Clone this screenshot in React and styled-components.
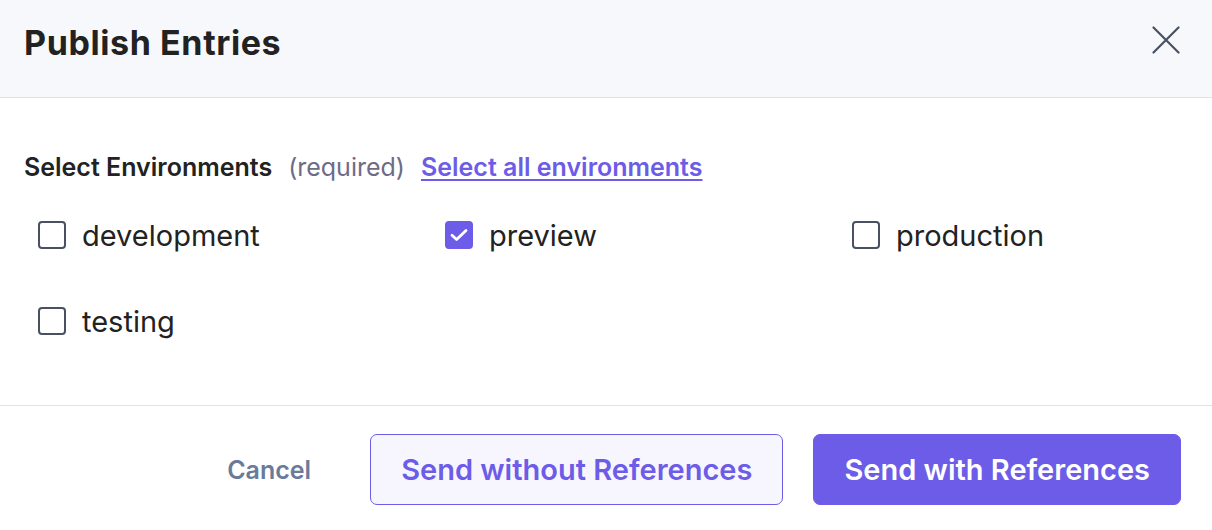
import React, { useState } from 'react';
import styled, { createGlobalStyle } from 'styled-components';

const GlobalStyle = createGlobalStyle`
  html, body {
    margin: 0;
    padding: 0;
    background: #ffffff;
  }
  body {
    font-family: Inter, "Noto Sans", sans-serif;
    color: #222222;
  }
`;

const environments = ['development', 'preview', 'production', 'testing'];

const App = () => {
  const [selected, setSelected] = useState(['preview']);

  const toggle = (env) => {
    setSelected((prev) =>
      prev.includes(env) ? prev.filter((e) => e !== env) : [...prev, env]
    );
  };

  return (
    <>
      <GlobalStyle />
      <Modal>
        <Header>
          <Title>Publish Entries</Title>
          <CloseButton aria-label="Close">
            <svg width="28" height="28" viewBox="0 0 28 28" fill="none">
              <path d="M1.5 1.5L26.5 26.5M26.5 1.5L1.5 26.5" stroke="#475161" strokeWidth="2.2" strokeLinecap="round" />
            </svg>
          </CloseButton>
        </Header>

        <Body>
          <LabelRow>
            <Label>Select Environments</Label>
            <Required>(required)</Required>
            <SelectAll href="#" onClick={(e) => { e.preventDefault(); setSelected(environments); }}>
              Select all environments
            </SelectAll>
          </LabelRow>

          <EnvGrid>
            {environments.map((env) => {
              const checked = selected.includes(env);
              return (
                <EnvOption key={env} onClick={() => toggle(env)}>
                  <Box $checked={checked}>
                    {checked && (
                      <svg width="18" height="14" viewBox="0 0 18 14" fill="none">
                        <path d="M2 7.2L6.6 11.6L16 2.4" stroke="#ffffff" strokeWidth="2.8" strokeLinecap="round" strokeLinejoin="round" />
                      </svg>
                    )}
                  </Box>
                  <EnvName>{env}</EnvName>
                </EnvOption>
              );
            })}
          </EnvGrid>
        </Body>

        <Footer>
          <CancelButton>Cancel</CancelButton>
          <Button $variant="outline">Send without References</Button>
          <Button $variant="primary">Send with References</Button>
        </Footer>
      </Modal>
    </>
  );
};

const Modal = styled.div`
  width: 1212px;
  height: 530px;
  background: #ffffff;
  display: flex;
  flex-direction: column;
`;

const Header = styled.div`
  height: 98px;
  box-sizing: border-box;
  background: #f7f8fc;
  border-bottom: 1px solid #dde3ee;
  display: flex;
  align-items: center;
  justify-content: space-between;
  padding: 0 32px 12px 24px;
`;

const Title = styled.h2`
  margin: 0;
  font-size: 34px;
  line-height: 40px;
  font-weight: 700;
  color: #222222;
  letter-spacing: 0.6px;
`;

const CloseButton = styled.button`
  border: none;
  background: none;
  padding: 0;
  width: 28px;
  height: 28px;
  margin-bottom: 5px;
  cursor: pointer;
  display: flex;
`;

const Body = styled.div`
  height: 308px;
  box-sizing: border-box;
  border-bottom: 1px solid #dde3ee;
  padding: 54px 24px 0 24px;
`;

const LabelRow = styled.div`
  display: flex;
  align-items: baseline;
  gap: 16px;
  line-height: 30px;
`;

const Label = styled.span`
  font-size: 25px;
  font-weight: 600;
  color: #222222;
`;

const Required = styled.span`
  font-size: 25px;
  font-weight: 400;
  color: #6e6b86;
`;

const SelectAll = styled.a`
  font-size: 25px;
  font-weight: 600;
  color: #6c5ce7;
  text-decoration: underline;
  text-underline-offset: 3px;
`;

const EnvGrid = styled.div`
  display: grid;
  grid-template-columns: repeat(3, 407px);
  row-gap: 30px;
  margin-top: 25px;
  padding-left: 14px;
`;

const EnvOption = styled.label`
  display: flex;
  align-items: center;
  gap: 16px;
  height: 56px;
  cursor: pointer;
`;

const Box = styled.span`
  width: 28px;
  height: 28px;
  box-sizing: border-box;
  border-radius: 4px;
  border: 2px solid ${(p) => (p.$checked ? '#6c5ce7' : '#475161')};
  background: ${(p) => (p.$checked ? '#6c5ce7' : '#ffffff')};
  display: flex;
  align-items: center;
  justify-content: center;
  flex-shrink: 0;
`;

const EnvName = styled.span`
  font-size: 29px;
  font-weight: 400;
  color: #222222;
`;

const Footer = styled.div`
  flex: 1;
  display: flex;
  align-items: center;
  justify-content: flex-end;
  gap: 30px;
  padding: 3px 31px 0 0;
`;

const CancelButton = styled.button`
  border: none;
  background: none;
  font-family: inherit;
  font-size: 25px;
  font-weight: 600;
  color: #6b7a99;
  padding: 0 29px 0 0;
  cursor: pointer;
`;

const Button = styled.button`
  height: 71px;
  box-sizing: border-box;
  border-radius: 7px;
  font-family: inherit;
  font-size: 29px;
  font-weight: 600;
  padding: 0 30px;
  cursor: pointer;
  border: 1px solid #6c5ce7;
  background: ${(p) => (p.$variant === 'primary' ? '#6c5ce7' : '#f7f6ff')};
  color: ${(p) => (p.$variant === 'primary' ? '#ffffff' : '#6c5ce7')};
`;

export default App;
